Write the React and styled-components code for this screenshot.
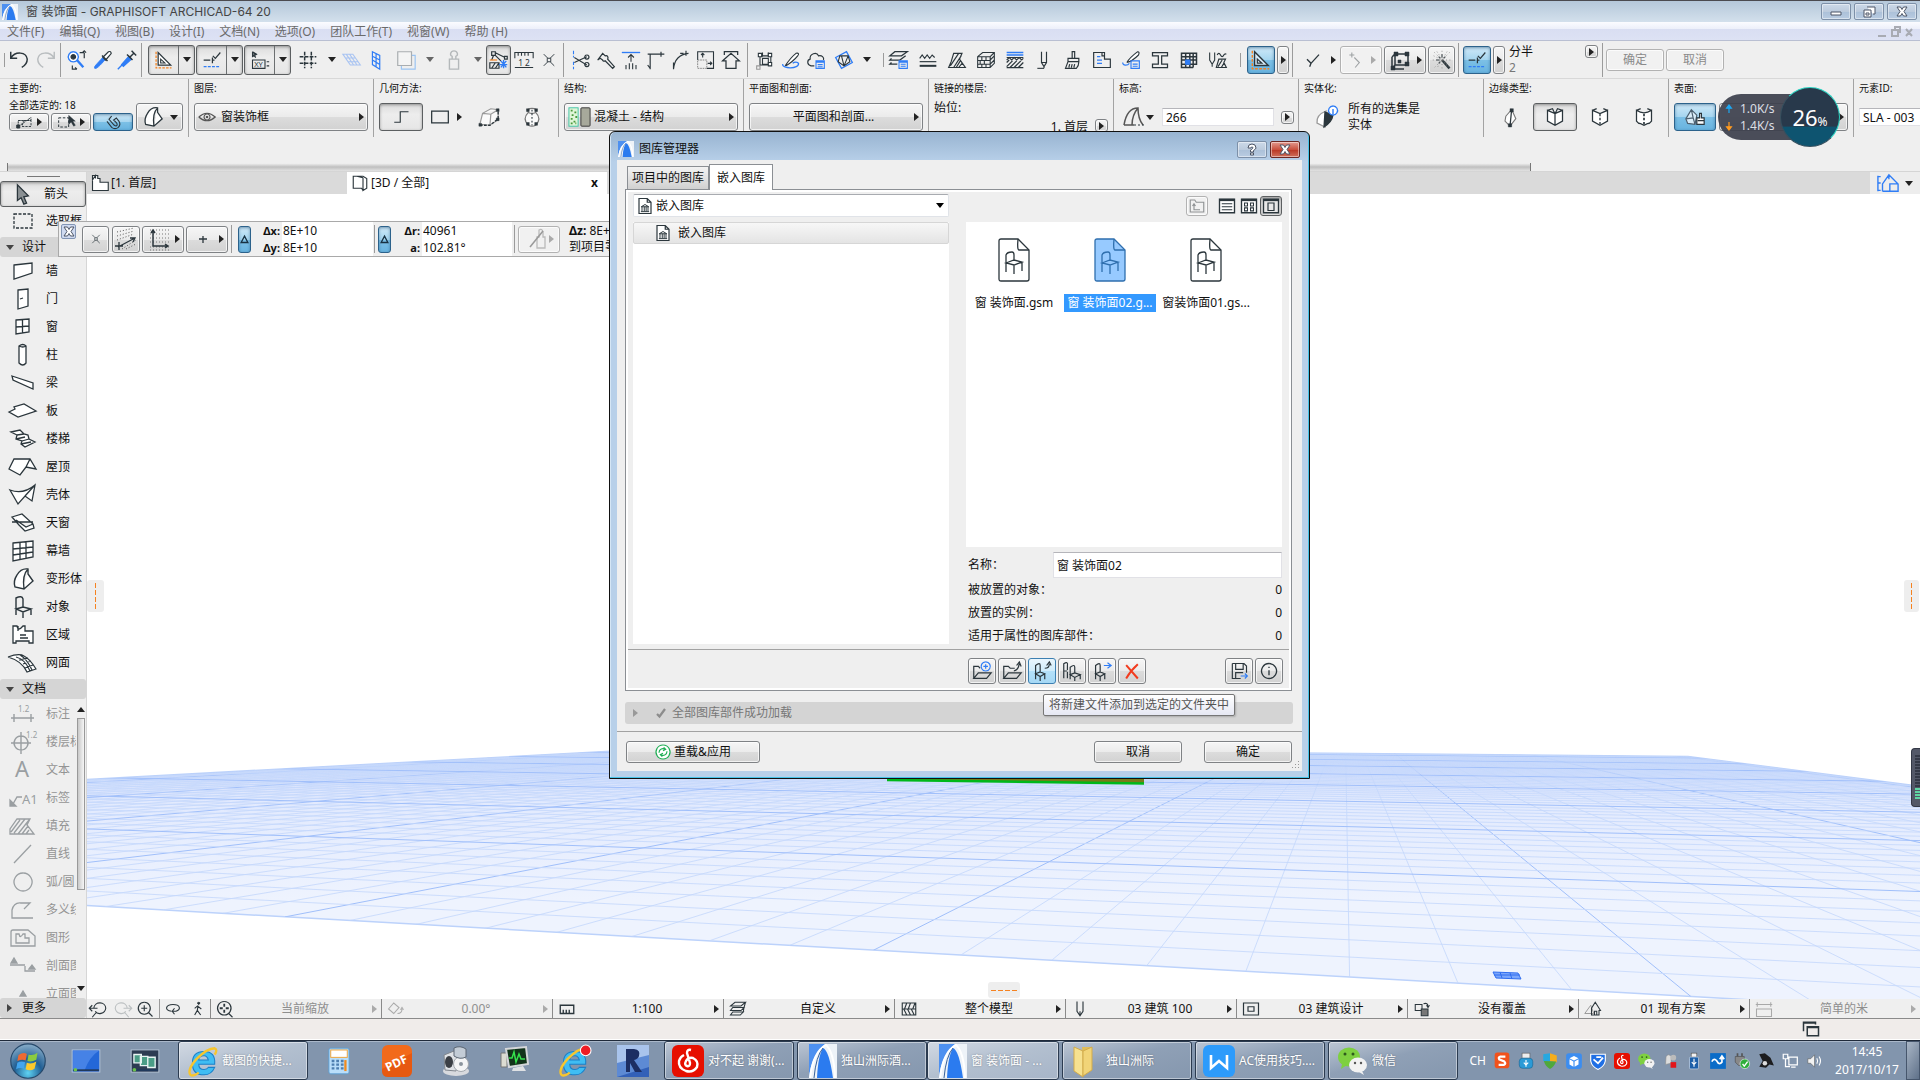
import React from "react";
import styled, { createGlobalStyle, css } from "styled-components";

const Global = createGlobalStyle`
  * { box-sizing: border-box; }
  html, body, #root { height: 100%; }
  body { margin: 0; overflow: hidden; background: #fff; }
  body, button, input, select {
    font-family: "Noto Sans", "Noto Sans CJK SC", sans-serif;
    font-size: 12px; line-height: 16px; color: #111;
  }
  button { margin: 0; padding: 0; border: 0; background: none; white-space: nowrap; cursor: default; }
  svg { display: block; flex: none; overflow: visible; }
`;

/* ---------- icons ---------- */
const K = "#2b363c";
const B = "#2f7df6";
const O = "#f58220";
const G = "#9a9fa2";

/* Each entry is a list of strokes: [path, stroke, fill, width, dash] or { t, x, y, s } for lettering. */
const ICONS = {
  undo: [["M3 3 V10 H10 M3 10 C8 2 20 3 21 11 C21 15 19 18 15 20", K, "none", 1.6]],
  redo: [["M21 3 V10 H14 M21 10 C16 2 4 3 3 11 C3 15 5 18 9 20", "#b9bdbf", "none", 1.6]],
  pick: [["M9 3 a5.500 5.500 0 1 0 .1 0", B, "#fff", 1.5], ["M9 6 a2.500 2.500 0 1 0 .1 0", K, K], ["M13 12 L20 20", B, "none", 2.600], ["M16 4 h5 M21 4 v6 M19 4 L21 2 L23 4 M8 18 v4 h5 M11 20 l2 2", K]],
  dropper: [["M4 21 C3 19 6 17 13 9 L16 11 C9 19 6 22 4 21", B, B, 1], ["M13 9 L19 3 Q22 2 22 5 L16 12 Z", K, "#fff"], ["M12 7 l6 6", K, "none", 1.6]],
  syringe: [["M2 22 L7 17", B, "none", 1.5], ["M6 17 L14 8 L17 11 L8 19 Z", B, B], ["M12 6 l6 6 M15 9 L20 4 M17 2 l5 5 M14 8 l3 3", K, "none", 1.6]],
  triangle: [["M5 3 V18 H20 Z", K, "#fff", 1.5], ["M8 11 V15.500 H13 Z", K], ["M2.500 2 V21.500 H21", O, "none", 1.5, "3 1.500"]],
  triangleB: [["M5 3 V18 H20 Z", K, "#d9eefa", 1.5], ["M8 11 V15.500 H13 Z", K], ["M2.500 2 V21.500 H21", O, "none", 1.5, "3 1.500"]],
  guide: [["M2 12 H10 M12.500 9 V16 M12 12 h3", K, "none", 1.5], ["M13 7 L16 10 L22 3", K, "none", 1.5], ["M2 20 H22", B, "none", 1.5, "3.500 1.500"]],
  xy: [["M3 2 V8 L5 7 L7 9 M3 2 L8 5 L5 7", K, K], ["M3 12 h15 v10 h-15 z", K], { t: "XY", x: 5, y: 20, s: 9 }, ["M20 14 h3 M20 19 h3", K]],
  hash: [["M8 2 V22 M16 2 V22 M2 8 H22 M2 16 H22", K, "none", 1.8, "4.500 1.500"]],
  ghostGrid: [["M1 5 H13 L22 18 H10 Z M5 5 L14 18 M9 5 L18 18 M4 9.500 H16 M7 14 H19", "#a9c4f2"]],
  wallGrid: [["M7 3 L15 7 V22 L7 17 Z M11 5 V20 M7 8 L15 12 M7 12 L15 17", B]],
  layersGhost: [["M7 7 H22 V22 H7 Z", "#9bc4f2"], ["M3 3 H18 V18 H3 Z", "#a9adb0", "#f4f4f4"]],
  weight: [["M7 11 H17 V22 H7 Z M10 11 V8 C7 7 8 2 12 2 C16 2 17 7 14 8 V11", "#b4b8ba", "none", 1.5]],
  trace: [["M4 3 h4 v4 h-4 z M6 7 L4 12 M8 4 L18 9 M8 7 L14 13 M18 8 h3 v3 h-3 z", K], ["M2 15 H12 V21 H2 Z M4 21 L8 15 M8 21 L12 15", K], ["M14 13 l6 7 M20 13 l-6 7 M17 12 v9 M12 17 h9", B, B, 1.5], ["M2 12 h8", O]],
  ruler: [["M1 10 V3 H23 V10 M5 3 v4 M9 3 v4 M13 3 v4 M17 3 v4 M1 21 H23", K], { t: "1 2", x: 5, y: 19, s: 10 }],
  cross: [["M3 2 L10 9 M21 2 L14 9 M3 22 L10 15 M21 22 L14 15 M9 9 h6 v6 h-6 z", K, "none", 1.6]],
  scissors: [["M3 1 V9 M3 14 V23", B, "none", 1.3, "4 2"], ["M4 9 L19 18 M4 15 L19 8", K], ["M19 6 a2.500 2.500 0 1 0 .1 0 M19 15 a2.500 2.500 0 1 0 .1 0", K, "none", 1.5]],
  axe: [["M2 12 L8 4 L11 7 C14 6 15 9 14 11 L22 20 L20 22 L11 13 C9 14 8 13 8 12 L5 10 Z", K, "none", 1.5]],
  extend: [["M1 3 H23", B, "none", 1.6], ["M12 14 V6 M8.500 9 L12 5.500 L15.500 9 M6 18 v5 M10 16 v7 M14 16 v7 M18 18 v5", K]],
  corner: [["M5 23 V5 H22 M2 5 h3 M18 2 v6 M2 18 L5 22", K, "none", 1.4]],
  fillet: [["M3 23 C4 12 10 5 21 4 M18 1 v6 M3 23 V15 M11 4 h4", K, "none", 1.4]],
  resize: [["M2 12 V2 H21 V22 H13", K], ["M2 12 H13 V22 H2 Z", "#888", "none", 1.2, "2 1"], ["M8 9 V4 M6 6 l2-2 l2 2 M14 16 h5 M17 14 l2 2 l-2 2", K]],
  house: [["M2 13 L12 4 L22 13 H18 V22 H6 V13 Z M4 6 V2 H20 V6", K, "none", 1.5]],
  groupBox: [["M5 5 h3 M16 5 h3 M6 5 V19 M19 5 V18 M6 7 H18 M6 18 H18 M9 3 v5 M16 3 v5 M9 10 h7 v7 h-7 z", K], ["M4 4 h4 v4 h-4 z M16 4 h4 v4 h-4 z M16 15 h4 v4 h-4 z", K, "#fff"], ["M2 19 h4 v4 h-4 z", "#999"]],
  penLine: [["M5 19 C7 16 14 7 18 4 C21 3 22 5 20 7 C17 11 9 18 5 19", K, "#fff"], ["M2 17 C1 23 22 23 21 16 C20 14 16 14 14 16", B, "none", 1.6]],
  cloud: [["M10 19 H6 C1 18 1 12 5 11 C4 4 13 2 15 7 C19 6 22 9 21 12", K, "none", 1.4], ["M12 13 H22 V22 H12 Z M12 14.500 H22 M14 17.500 h6 M14 20 h6", B]],
  diamond: [["M2 9 L15 2 L22 15 L9 22 Z", B, "none", 1.6], ["M7 7 L17 7 L19 14 L12 19 L5 14 Z M9 7 L12 19 M17 7 L12 19", K]],
  layerStack: [["M7 2 H22 L15 7 H1 Z M3 10 L1 12 H13 L20 7 M3 15 L1 17 H10", K, "none", 1.5], ["M12 13 H22 V22 H12 Z M14 17 h6 M14 19.500 h6 M12 14.500 H22", B]],
  lineTypes: [["M2 10 L5 6 L8 10 L11 6 L14 10 L17 6 L20 9", K], ["M2 14 H22", K, "none", 1.4], ["M2 19 H22", K, "none", 2.400]],
  fill: [["M8 4 H18 L15 11 L22 21 H2 L5 14 Z M4 19 L14 4 M8 21 L17 7 M11 21 L16 13 M14 21 L18 16", K, "none", 1.4]],
  brick: [["M2 8 L8 3 H22 V16 L17 21 H2 Z M2 8 H17 V21 M17 8 L22 3 M2 12.500 H17 M2 17 H17 M7 8 v4 M12 8 v4 M5 12.500 v4 M10 12.500 v4 M7 17 v4 M12 17 v4 M17 12 L22 7 M17 17 L22 12", K]],
  composite: [["M2 3 H22 M2 6 H22", B, "none", 1.6], ["M2 9 H22 M2 12 L5 9 L8 12 L11 9 L14 12 L17 9 L20 12 L22 10", K], ["M2 15 L5 12 M2 20 L9 13 M6 21 L14 13 M11 21 L19 13 M16 21 L22 15 M2 21 H22", K, "none", 1.5]],
  pen: [["M9 2 V15 L12 20 L15 15 V2 M9 15 h6 M12 20 v2", K, "none", 1.4], ["M4 22 h8", K]],
  brush: [["M11 2 h3 v8 h-3 z M6 10 H19 V14 H6 Z M6 14 L3 22 H16 Q19 19 19 14 M8 17 L7 21 M11 17 L10 21 M14 17 L13 21", K, "none", 1.4]],
  zone: [["M2 3 H12 V7 H15 V11 H22 V21 H2 Z M15 7 V3 H12", K, "none", 1.4], ["M6 8 h4 M6 12 h6 M6 16 h6", B, "none", 1.5]],
  penBox: [["M7 15 C10 10 16 5 20 2 C22 2 22 4 21 6 C17 10 12 14 7 15", K, "#fff"], ["M2 15 C2 19 8 19 10 16 M12 13 H22 V22 H12 Z M14 17 h6 M14 19.500 h6", B, "none", 1.4]],
  ibeam: [["M3 3 H21 V7 H14 V17 H21 V21 H3 V17 H10 V7 H3 Z", K, "none", 1.5]],
  table: [["M3 4 H21 V17 H3 Z M3 8 H21 M3 12 H21 M8 4 V21 M13 4 V21 M17 4 V21 M3 17 V21 H17", K, "none", 1.8], ["M8 12 h5 v5 h-5 z", B, B]],
  penFill: [["M2 3 V12 L5 17 L8 12 V3 M5 17 v3", K], ["M11 6 q2 -4 4 0 q2 4 4 0 q1 -2 3 -1 M13 11 H21 L19 15 L22 21 H10 Z M12 20 L17 12 M16 21 L19 16", K, "none", 1.4]],
  check: [["M3 11 L9 17 L21 4 M9 17 L7 22", K, "none", 2]],
  ghostNode: [["M7 3 v6 M4 6 h6 M10 9 L16 15 L11 21", "#9ea2a4"]],
  editBox: [["M7 6 H20 V17 H7 Z M4 9 V21 H16 M4 21 L7 17 M4 9 L7 6", K, "none", 1.5], ["M6 4 h4 v4 h-4 z M17 4 h4 v4 h-4 z M17 14 h4 v4 h-4 z M3 18 h4 v4 h-4 z M10 12 h3 v3 h-3 z", K, K, 0.5]],
  wand: [["M12 12 L21 22", K, "none", 3], ["M12 5 v4 M5 12 h4 M8 8 l2 2 M16 8 l-2 2 M8 16 l2 -2", K], ["M3 3 l18 18 M12 1 V22 M21 3 L3 21 M1 12 H22 M6 2 L18 20 M2 7 L20 16 M18 2 L7 20", "#777", "none", 1, "1 3"]],
  eye: [["M1 12 Q12 2 23 12 Q12 22 1 12", "#555", "none", 1.5], ["M12 8 a4 4 0 1 0 .1 0", "#555", "none", 1.5], ["M12 11 a1 1 0 1 0 .1 0", "#444", "#444"]],
  polyL: [["M3 19 H11 V5 H22", K, "none", 1.5]],
  rect: [["M2 5 H22 V19 H2 Z", K, "none", 1.5]],
  box3: [["M2 20 L5 8 L14 3 L22 4 V15 L13 21 Z M5 8 L14 9 L22 4 M14 9 L13 21", "#999", "#fafafa"], ["M2 21 L13 21 L22 14 V4", K, "none", 1.4, "3 1.500"], ["M1 19 h3 v3 h-3 z M20 3 h3 v3 h-3 z M20 13 h3 v3 h-3 z", K, K, 0.5]],
  vase: [["M7 4 Q12 1 17 4 L16 7 Q23 14 16 21 Q12 23 8 21 Q1 14 8 7 Z M8 7 Q12 9 16 7", "#777", "#fafafa"], ["M12 4 V21", K, "none", 1.2, "2 2"], ["M6 3 h3 v3 h-3 z M15 3 h3 v3 h-3 z M6 18 h3 v3 h-3 z M15 18 h3 v3 h-3 z", K, K, 0.5]],
  morph: [["M6 8 Q10 1 17 2 L17 7 L22 14 L13 22 L4 20 Q2 14 6 8 M17 2 Q11 8 13 22", K, "#fff", 1.4]],
  magnet: [["M3 8 L7 4 L14 12 Q17 15 15 17 Q13 18 11 16 Z", K, "none", 0.1], ["M10 3 L6 8 L14 17 Q17 19 18 17 Q19 15 17 13 L13 9 L17 6 L21 11 Q24 16 20 20 Q15 24 10 20 L3 11", K, "none", 1.7]],
  selArrow: [["M3 18 V10 H20 V6 M3 18 L20 6 M3 10 h4", K, "none", 1.3, "3 1"], ["M10 10 H20 V18 H8 Z", K, "none", 1.2, "3 1.500"], ["M1 16 h4 v4 h-4 z", K, K]],
  selBox: [["M2 7 H14 V18 H2 Z", K, "none", 1.2, "3 2"], ["M14 4 V15 L17 12 L20 17 L22 16 L19 11 L22 11 Z", K, K, 0.5]],
  slope: [["M3 20 C5 8 10 3 17 3 Q17 14 22 20 M3 20 H13 M17 3 Q11 10 11 20", "#555", "none", 1.5], ["M13 20 H23", K, "none", 1.2, "2 2"]],
  solid: [["M3 18 Q2 10 12 6 L11 22 Z", "#999", "#fff"], ["M11 7 L19 10 Q18 17 10 22 Z", K, K], ["M19 1 a4.500 4.500 0 1 0 .1 0", B, "#fff", 1.3], ["M19 4 v5", B, "none", 1.4]],
  edgeA: [["M14 3 L7 11 L6 17 L12 23 L19 14 Z", "#777", "#fff"], ["M14 3 L12 23", K, "none", 1.5], ["M12 2 h4 v4 h-4 z M10 20 h4 v4 h-4 z", K, K, 0.5]],
  book1: [["M3 4 L12 8 L21 4 V17 L12 22 L3 17 Z M12 8 V22 M3 4 L9 2 L12 8 L15 2 L21 4", K, "#fff", 1.5]],
  book2: [["M3 4 L12 8 L21 4 V17 L12 22 L3 17 Z M3 4 L8 2 M21 4 L16 2", K, "#fff", 1.5], ["M12 8 V22", K, "none", 1.6, "3 2"]],
  book3: [["M3 4 L8 2 M21 4 L16 2 M3 4 Q12 10 21 4 V17 Q19 20 16 20 L12 22 L8 20 Q5 20 3 17 Z", K, "#fff", 1.5], ["M12 8 V22", K, "none", 2, "3 2"]],
  surface: [["M2 14 L8 4 L14 10 L12 20 L4 19 Z M8 4 L10 13 L12 20 M10 13 L2 14", "#4d6070", "#d9ecf7"], ["M17 8 h2 v5 h3 v7 h-8 v-7 h3 z M15 16 h7", K, "#fff"]],
  slab: [["M2 2 H9 V6 H12 V11 H23 V22 H2 Z M2 2 V8 L6 2 V6", K, "#fff", 1.5]],
  door3: [["M8 3 H16 L21 6 V19 L16 22 V5 M16 5 L8 3 H3 V19 H8 M16 22 L14 19 H3", K, "#fff", 1.5]],
  model: [["M6 21 V13 L13 3 L23 13 V21 H14 V13 L23 13 M6 21 H14 M13 3 V8", B, "none", 1.5], ["M1 4 v17 M1 5 h3 M1 12 h3 M1 20 h3", B, "none", 1.5]],
  arrowTool: [["M7 2 V19 L11 16 L14 23 L17 22 L14 15 L19 14 Z", K, "#8a9093", 1.4]],
  marquee: [["M3 5 H21 V19 H3 Z", K, "none", 1.3, "3 1.500"]],
  wall: [["M3 6 L21 4 V14 L3 20 Z", K, "#fff", 1.3]],
  door: [["M7 3 L17 2 V19 L7 22 Z M9 12 l3 -1", K, "#fff", 1.3]],
  window: [["M5 5 L18 4 V17 L5 19 Z M11.500 4 V18 M5 12 L18 11", K, "#fff", 1.3]],
  column: [["M8 3 Q12 0 15 3 V20 Q12 24 8 20 Z M8 3 Q12 5 15 3", K, "#fff", 1.3]],
  beam: [["M1 5 L22 12 V18 L2 9 Z", K, "#fff", 1.3]],
  slabT: [["M-2 13 L4 10 L3 8 L13 5 L25 12 L7 18 Z", K, "#fff", 1.3]],
  stair: [["M0 5 L9 3 L13 7 L17 8 L18 12 L24 15 L14 20 L10 17 L11 14 L5 12 L6 8 Z M6 8 L13 7 M11 14 L18 12 M5 12 L14 10 M10 17 L20 15", K, "#fff", 1.3]],
  roof: [["M-2 14 L3 4 H19 L25 14 L15 12 L9 20 Z M15 12 L19 4", K, "#fff", 1.3]],
  shell: [["M-1 7 Q12 12 24 2 L21 18 L14 13 L7 21 Z M14 13 L24 2", K, "#fff", 1.3]],
  skylight: [["M1 6 L11 3 L22 13 L23 17 L14 20 L8 14 Z M1 11 L22 11 M5 9 L15 16 L22 13", K, "#fff", 1.3]],
  curtain: [["M2 4 L22 2 V18 L2 22 Z M9 3 V20 M15 3 V19 M2 10 L22 8 M2 16 L22 13", K, "#fff", 1.3]],
  chair: [["M5 20 V3 Q11 0 12 4 V12 M5 14 L12 12 L20 14 L12 17 Z M12 17 V23 M20 14 V20", K, "none", 1.4]],
  zoneT: [["M2 3 H6 Q7 9 12 3 H14 V8 H22 V20 H18 V18 H5 V20 H2 Z M7 3 V8 M9 12 h6 M9 15 h8", K, "#fff", 1.3]],
  mesh: [["M-3 6 Q8 2 13 5 Q19 8 25 18 L16 21 Q11 10 -3 6 M5 6 Q14 8 19 20 M9 4 Q16 8 21 19 M8 9 L17 7 M12 13 L20 10 M14 17 L22 14", K, "#fff", 1.2]],
  dim: [["M0 16 H23 M3 12 v8 M20 12 v8", G, "none", 1.4], { t: "1.2", x: 7, y: 10, s: 8, c: G }],
  level: [["M10 6 a7 7 0 1 0 .1 0 M10 2 V24 M0 13 H20", G, "none", 1.4], { t: "1.2", x: 15, y: 8, s: 8, c: G }],
  textA: [{ t: "A", x: 4, y: 19, s: 22, c: G }],
  labelA: [["M2 18 L6 11 H11", G, "none", 1.4], ["M-1 14 V20 H5 Z", G, G], { t: "A1", x: 11, y: 18, s: 13, c: G }],
  fillG: [["M6 5 H19 L16 11 L23 20 H-1 V15 Z M3 19 L14 5 M7 20 L18 6 M11 20 L17 12 M15 20 L18 16 M0 18 L9 6", G, "none", 1.3]],
  line: [["M3 21 L20 3", G, "none", 1.3]],
  circle: [["M12 3 a9 9 0 1 0 .1 0", G, "none", 1.3]],
  poly: [["M22 20 H1 V12 Q3 4 10 5 H19 L13 11", G, "none", 1.3]],
  drawing: [["M2 4 H17 L24 10 V20 H0 V6 Q0 4 2 4 M5 8 H8 Q9 13 12 8 H14 V12 H18 V17 H5 Z", G, "none", 1.3]],
  section: [["M-1 11 H14 V17 H24", G, "none", 1.3, "15 1"], ["M0 9 L3 4 L6 9 Z M18 15 L21 11 L24 15 Z", G, G]],
  elev: [["M-1 18 H24", G, "none", 1.4], ["M9 14 L12 9 L15 14 Z", G, G]],
  ghostPen: [["M14 3 q3 -2 4 2 v5 h2 v11 h-8 v-11 h2 z", "#bbb"], ["M5 20 L18 4", "#999", "none", 1.6]],
  dotsArrow: [["M3 5 L20 1 M3 9 L20 4 M3 13 L20 7 M8 22 L22 13 M12 22 L22 17", "#555", "none", 1, "1 2"], ["M4 20 L21 11 M16 11 h5 l-2 4 M5 15 v8 M1 19 h8", K, "none", 1.3]],
  dotsXY: [["M3 3 H22 M3 7 H22 M3 11 H22 M3 15 H22 M3 20 H22 M3 23 H22", "#777", "none", 1, "1 2"], ["M6 4 V19 H20 M4 6 L6 3 L8 6 M18 17 l3 2 l-3 2", K, "none", 1.5]],
  plus: [["M12 9 V16 M8 12 H16", K, "none", 1.3]],
  delta: [["M12 3 L21 20 H3 Z", "#183142", "none", 3.500]],
  libFile: [["M4 2 H15 L20 7 V22 H4 Z M15 2 V7 H20", K, "#fff", 1.6], ["M7 13 L12 10 L17 13 Z M8 13 v6 M11 13 v6 M13.500 13 v6 M16 13 v6 M6.500 19.500 h11", K, "none", 1.3]],
  upFolder: [["M3 7 V4 H9 L11 7 H21 V20 H3 Z M16 17 H8 V10 M6 12 l2 -3 l2 3", "#8f9294", "none", 1.5]],
  list: [["M2 3 H22 V21 H2 Z", K, "#fff", 1.8], ["M2 4 H22", K, "none", 3], ["M5 9 H19 M5 13 H19 M5 17 H19", K, "none", 1.4]],
  tiles: [["M2 3 H22 V21 H2 Z", K, "#fff", 1.8], ["M2 4 H22", K, "none", 3], ["M6 8 h4 v4 h-4 z M14 8 h4 v4 h-4 z M6 14.500 h4 v4 h-4 z M14 14.500 h4 v4 h-4 z", K, "none", 1.4]],
  large: [["M2 3 H22 V21 H2 Z", K, "#e8e8e8", 1.8], ["M2 4 H22", K, "none", 3], ["M8 8 h8 v10 h-8 z", K, "none", 1.6]],
  folderNew: [["M3 20 V7 H8 L10 9 M3 20 L8 14 H22 L17 20 Z", K, "none", 1.3], ["M16 2 a5 5 0 1 0 .1 0 M16 4.500 v5 M13.500 7 h5", B, "none", 1.3]],
  folderUp: [["M3 20 V7 H8 L10 9 H15 M3 20 L8 14 H22 L17 20 Z M14 12 Q19 11 20 4 M17 6 L20 2 L22 7", K, "none", 1.3]],
  chairUp: [["M5 21 V6 Q10 2 10 6 V14 M5 15 L10 13 L15 15 L10 18 Z M10 18 V23 M15 15 V21", K, "none", 1.3], ["M15 9 Q20 9 20 4 M17 6 L20 2 L22 6", K]],
  chairs: [["M3 20 V4 Q8 1 7 6 V11 M3 12 h4 M7 20 V13", K, "none", 1.3], ["M10 21 V8 Q15 4 15 8 V15 M10 16 L15 14 L21 16 L15 19 Z M15 19 V23 M21 16 V21", K, "none", 1.3]],
  chairOut: [["M5 21 V6 Q10 2 10 6 V14 M5 15 L10 13 L15 15 L10 18 Z M10 18 V23 M15 15 V21", K, "none", 1.3], ["M14 6 H21 M18 3 L22 6 L18 9", B]],
  redX: [["M5 5 L19 21 M19 4 Q10 12 5 21", "#f23b1e", "none", 2.400]],
  save: [["M4 3 H18 L21 6 V14 M14 21 H4 V3 M8 3 V10 H17 V3 M8 21 V14 H17", K, "none", 1.4], ["M14 18 H22 M19 15 L22 18 L19 21", B, "none", 1.4]],
  info: [["M12 3 a9 9 0 1 0 .1 0 M12 11 V17 M12 7 v1.500", K, "none", 1.6]],
  reload: [["M12 1.500 a10.500 10.500 0 1 0 .1 0", "#1fae54", "#fff", 1.8], ["M6 13 C6 7 12 6 15 8 M13 5 L16 8 L12 10 M18 11 C18 17 12 18 9 16 M11 19 L8 16 L12 14", "#1fae54", "none", 1.8]],
  tick: [["M4 14 L9 19 L20 4", "#8c8c8c", "none", 4.500]],
  zPrev: [["M5 11 C6 1 21 2 21 11 C20 19 10 20 7 15 M-1 11 H10 M3 7 L-1 11 L3 15 M8 17 L3 23", K, "none", 1.5]],
  zNext: [["M19 11 C18 1 3 2 3 11 C4 19 14 20 17 15 M25 11 H14 M21 7 L25 11 L21 15 M16 17 L21 23", "#bcc0c2", "none", 1.5]],
  zIn: [["M11 3 a8 8 0 1 0 .1 0 M11 7 V15 M7 11 H15 M17 17 L22 22", K, "none", 1.5]],
  orbit: [["M10 15 C0 14 2 6 12 6 C22 6 23 13 16 15 H11 M14 11 L11 15 L14 19", K, "none", 1.5]],
  walk: [["M13 2 a1.500 1.500 0 1 0 .1 0", K, K, 1.5], ["M12 7 L11 14 L7 21 M11 14 L16 21 M12 7 L7 11 M12 8 L17 12", K, "none", 1.7]],
  zFit: [["M11 2 a9 9 0 1 0 .1 0 M17 18 L22 23", K, "none", 1.5], ["M11 5 v4 M11 13 v4 M5 11 h4 M13 11 h4", K, "none", 2.400]],
  tilt: [["M2 12 L9 4 L16 10 L9 18 Z M14 18 Q20 18 20 12 M18 13 L20 10 L22 13", "#aaa", "none", 1.4]],
  scale: [["M3 7 H21 V18 H3 Z M7 18 v-5 M11 18 v-5 M15 18 v-5", K, "none", 1.8]],
  stack: [["M8 3 H22 L16 8 H2 Z M5 10 H20 L16 14 H2 Z M22 3 L20 10 M5 16 H19 L15 20 H2 Z M20 10 L19 16", K, "none", 1.4]],
  hatch: [["M3 4 H21 V20 H3 Z M3 12 H21 M6 12 L9 4 M11 12 L14 4 M17 12 L20 4 M9 20 L5 12 M14 20 L10 12 M19 20 L15 12", K, "none", 1.5]],
  penV: [["M8 2 V15 L12 21 L16 15 V2 M12 15 V21", K, "none", 1.5]],
  frame: [["M2 4 H22 V20 H2 Z M8 9 H16 V15 H8 Z", K, "none", 1.6]],
  override: [["M3 6 H12 V14 H3 Z M14 5 Q20 3 20 9 M18 7 L20 10 L22 7", K, "none", 1.4], ["M11 12 h9 v9 h-9 z", K, "#777", 1.4]],
  reno: [["M1 18 L9 7 L13 18 Z", "#999"], ["M10 20 V11 L15 3 L22 14 H20 V20 Z M14 20 v-5 h3 v5", K, "none", 1.4]],
  dimG: [["M1 6 H23 M3 3 v6 M21 3 v6 M2 12 H22 V22 H2 Z", "#a9a9a9", "none", 1.4]],
  windows: [["M2 15 V3 H18 V6 M2 4 H18 M7 9 H22 V21 H7 Z M7 10 H22", K, "none", 2]],
};

function Icon({ n, s = 24, o }) {
  return (
    <svg width={s} height={s} viewBox="0 0 24 24" opacity={o} aria-hidden="true">
      {ICONS[n].map((p, i) =>
        Array.isArray(p) ? (
          <path key={i} d={p[0]} stroke={p[1] || K} fill={p[2] || "none"} strokeWidth={p[3] || 1.3} strokeDasharray={p[4]} />
        ) : (
          <text key={i} x={p.x} y={p.y} fontSize={p.s} fill={p.c || K}>{p.t}</text>
        )
      )}
    </svg>
  );
}

function Logo({ w = 16, h = 18 }) {
  return (
    <svg width={w} height={h} viewBox="0 0 28 34" preserveAspectRatio="none" aria-hidden="true">
      <path d="M0 0 H28 V34 H0 Z" fill="#eef3f8" />
      <path d="M0 0 H16 Q2 12 0 34 Z" fill="#4d90f0" />
      <path d="M8 34 Q9 12 14 4 Q20 6 24 34 Z" fill="#2b7bef" />
      <path d="M1 34 Q4 8 17 1 Q25 8 26 34" fill="none" stroke="#fff" strokeWidth="2" />
      <path d="M5 34 Q7 12 14 4" fill="none" stroke="#355f9a" />
    </svg>
  );
}

/* ---------- shared controls ---------- */
const Tri = styled.i`
  flex: none; width: 0; height: 0;
  ${(p) => p.$down
    ? css`border: 4px solid transparent; border-top: 5px solid ${p.$c || "#222"}; border-bottom: 0;`
    : css`border: 4px solid transparent; border-left: 5px solid ${p.$c || "#222"}; border-right: 0;`}
`;

const raised = css`
  border: 1px solid #7f8285;
  border-radius: 3px;
  background: linear-gradient(#f6f6f6, #ebebeb 50%, #dcdcdc 51%, #d2d2d2);
  box-shadow: inset 0 0 0 1px rgba(255, 255, 255, 0.7);
`;
const blueFace = css`
  border: 1px solid #2c628b;
  border-radius: 3px;
  background: linear-gradient(#cfe9f8, #a5d5ef 50%, #7cc0e6 51%, #68b3df);
  box-shadow: inset 0 1px 3px rgba(20, 70, 110, 0.5);
`;
const pressedFace = css`
  border: 1px solid #5c5f61;
  border-radius: 3px;
  background: linear-gradient(#dcdcdc, #ededed 40%, #e6e6e6);
  box-shadow: inset 0 1px 3px rgba(0, 0, 0, 0.35);
`;

const Btn = styled.button`
  display: flex; align-items: center; justify-content: ${(p) => p.$j || "center"};
  flex: none; gap: ${(p) => p.$gap || 0}px;
  width: ${(p) => p.$w}px; height: ${(p) => p.$h || 28}px;
  padding: 0 ${(p) => p.$p || 0}px;
  ${(p) => (p.$k === "flat" ? "" : p.$k === "blue" ? blueFace : p.$k === "pressed" ? pressedFace : raised)}
  ${(p) => p.disabled && css`border-color: #b2b2b2; background: #f1f1f1; color: #8a8a8a;`}
`;
const Sep = styled.span`
  flex: none; width: 1px; height: ${(p) => p.$h || 34}px; background: #9b9b9b;
  margin: 0 ${(p) => p.$r || 0}px 0 ${(p) => p.$l || 0}px;
`;

/* ---------- application frame ---------- */
const Page = styled.div`
  position: relative; display: flex; flex-direction: column; width: 100%; height: 100vh; overflow: hidden; background: #efefef;
`;
const TitleBar = styled.header`
  display: flex; align-items: center; gap: 8px; flex: none; height: 22px; padding: 0 3px 0 2px;
  border-top: 1px solid #4b4b50; background: linear-gradient(#b5c8da, #d3e0ec);
  color: #444; font-family: Inter, "Noto Sans CJK SC", sans-serif;
`;
const WinBtns = styled.div`display: flex; gap: 3px; margin-left: auto;`;
const WinBtn = styled.button`
  display: grid; place-items: center; width: 30px; height: 17px; border: 1px solid ${(p) => (p.$red ? "#6b2723" : "#7d90a8")};
  border-radius: 2px; box-shadow: inset 0 0 0 1px rgba(255, 255, 255, 0.45);
  background: ${(p) => (p.$red ? "linear-gradient(#e39a8f, #c9513f 50%, #b93522 51%, #d0705c)" : "linear-gradient(#ccd9e8, #bccbdd 50%, #abc0d8 51%, #b9cce2)")};
`;
const MenuBar = styled.nav`
  display: flex; align-items: center; gap: 15px; flex: none; height: 19px; padding: 1px 6px 0 7px;
  border-bottom: 1px solid #b9bfd2; background: linear-gradient(#fbfcff, #eceffa 40%, #d9def2 41%, #dde2f4);
  button { color: #6a6a6a; }
`;
const Mdi = styled.span`display: flex; gap: 7px; margin-left: auto;`;
const ToolBar = styled.div`
  display: flex; align-items: center; flex: none; height: 38px; border-bottom: 1px solid #d8d8d8; overflow: hidden;
`;
const Split = styled.span`
  display: flex; flex: none; width: 47px; height: 30px; margin-right: 1px;
  ${pressedFace}
  button { display: grid; place-items: center; flex: 1; }
  button + button { flex: 0 0 16px; border-left: 1px solid #6c6f71; }
`;
const Stack = styled.span`
  display: flex; flex-direction: column; flex: none; width: ${(p) => p.$w}px; padding-left: ${(p) => p.$pl || 0}px;
  line-height: 16px; white-space: nowrap;
  small { font-size: 12px; color: #777; }
`;
const Gap = styled.span`flex: none; width: ${(p) => p.$w}px;`;

function WinGlyph({ t }) {
  const d = {
    min: "M2 7 H12 V10 H2 Z",
    max: "M5 2 H13 V9 H11 M2 5 H9 V12 H2 Z M4 8 h3 v2 h-3 z",
    close: "M2 2 H5.500 L7 4.500 L8.500 2 H12 L9 6.500 L12 11 H8.500 L7 8.500 L5.500 11 H2 L5 6.500 Z",
    help: "M3 5 Q3 1 7 1 Q11 1 11 5 Q11 6 8.500 7.500 V9 H5.500 V7 Q8 5.500 8 5 Q8 4 7 4 Q6 4 6 5 Z M5.500 10 h3 v2 h-3 z",
  }[t];
  return (
    <svg width="14" height="13" viewBox="0 0 14 13" aria-hidden="true">
      <path d={d} fill="#fff" stroke="#4c5566" strokeWidth="1" />
    </svg>
  );
}

const MENUS = ["文件(F)", "编辑(Q)", "视图(B)", "设计(I)", "文档(N)", "选项(O)", "团队工作(T)", "视窗(W)", "帮助 (H)"];

function Tool({ n, w = 25, s = 22, k = "flat", h = 30, o }) {
  return <Btn $w={w} $h={h} $k={k} aria-label={n}><Icon n={n} s={s} o={o} /></Btn>;
}
function Drop({ w = 16, c }) {
  return <Btn $w={w} $k="flat" aria-label="more"><Tri $down $c={c} /></Btn>;
}

function MainTools() {
  return (
    <ToolBar role="toolbar">
      <Sep $h={14} $l={4} />
      <Tool n="undo" w={28} /><Tool n="redo" />
      <Sep $l={2} $r={2} />
      <Tool n="pick" w={26} /><Tool n="dropper" /><Tool n="syringe" />
      <Sep $l={2} $r={6} />
      {["triangle", "guide", "xy"].map((n) => (
        <Split key={n}>
          <button aria-label={n}><Icon n={n} s={20} /></button>
          <button aria-label={n + " options"}><Tri $down /></button>
        </Split>
      ))}
      <Tool n="hash" w={32} s={20} /><Drop />
      <Tool n="ghostGrid" w={24} s={20} /><Tool n="wallGrid" /><Tool n="layersGhost" w={33} /><Drop c="#666" />
      <Tool n="weight" w={32} /><Drop c="#666" />
      <Tool n="trace" k="pressed" /><Tool n="ruler" s={20} /><Tool n="cross" s={14} />
      <Sep $l={2} $r={4} />
      {["scissors", "axe", "extend", "corner", "fillet", "resize", "house"].map((n) => <Tool key={n} n={n} s={20} />)}
      <Sep $l={4} $r={3} />
      <Tool n="groupBox" w={27} s={20} /><Tool n="penLine" s={20} /><Tool n="cloud" s={20} /><Tool n="diamond" w={31} s={20} /><Drop />
      <Sep $h={14} $l={8} />
      {["layerStack", "lineTypes", "fill", "brick", "composite", "pen", "brush", "zone", "penBox", "ibeam", "table", "penFill"].map((n) => (
        <Tool key={n} n={n} w={29} s={20} />
      ))}
      <Sep $h={14} $l={8} $r={6} />
      <Tool n="triangleB" w={28} h={28} k="blue" />
      <Gap $w={2} />
      <Btn $w={12} aria-label="options"><Tri /></Btn>
      <Sep $l={3} $r={4} />
      <Tool n="check" w={32} s={16} />
      <Btn $w={9} $k="flat" aria-label="options"><Tri /></Btn>
      <Gap $w={2} />
      <Btn $w={42} $gap={5} disabled aria-label="node"><Icon n="ghostNode" s={20} /><Tri $c="#aaa" /></Btn>
      <Gap $w={2} />
      <Btn $w={42} $gap={5} aria-label="edit"><Icon n="editBox" /><Tri /></Btn>
      <Gap $w={2} />
      <Btn $w={27} aria-label="wand"><Icon n="wand" s={20} /></Btn>
      <Sep $l={3} $r={4} />
      <Tool n="guide" w={28} h={28} k="blue" s={20} />
      <Gap $w={2} />
      <Btn $w={12} aria-label="options"><Tri /></Btn>
      <Stack $w={80} $pl={4}>分半<small>2</small></Stack>
      <TopBtn $w={13} $h={13} aria-label="options"><Tri /></TopBtn>
      <Sep $l={4} $r={3} />
      <Btn $w={58} $h={22} disabled>确定</Btn>
      <Gap $w={2} />
      <Btn $w={58} $h={22} disabled>取消</Btn>
    </ToolBar>
  );
}
const TopBtn = styled(Btn)`align-self: flex-start; margin-top: 4px;`;

/* ---------- info box ---------- */
const InfoBar = styled.section`display: flex; flex: none; height: 82px; overflow: hidden;`;
const Cell = styled.div`
  position: relative; flex: none; width: 185px; height: 58px; padding: 0 5px; white-space: nowrap;
  border-right: 1px solid #a3a3a3;
  &:first-child { width: 189px; padding-left: 9px; }
  &:last-child { border-right: 0; }
  h2 { margin: 0; height: 16px; font-weight: 400; font-size: 10px; line-height: 18px; }
`;
const Body = styled.div`
  display: flex; align-items: ${(p) => p.$a || "center"}; gap: ${(p) => p.$g || 2}px; height: 28px; margin-top: ${(p) => (p.$t === undefined ? 8 : p.$t)}px;
`;
const Count = styled.p`margin: 2px 0 0; height: 15px; font-size: 10px; line-height: 14px;`;
const FirstCell = styled.div`display: grid; grid-template-columns: auto 47px; column-gap: 2px; align-items: end; margin-top: 1px;`;
const Pair = styled.div`display: flex; gap: 2px;`;
const Field = styled.input`
  width: ${(p) => p.$w}px; height: ${(p) => p.$h || 18}px; padding: 0 3px; border: 1px solid #e1e1e6; border-top-color: #b5b5ba; background: #fff; outline: 0;
`;
const Label = styled.span`flex: 1; text-align: ${(p) => (p.$c ? "center" : "left")};`;
const Story = styled.div`
  display: grid; gap: 3px; padding-top: 5px;
  div { display: flex; justify-content: flex-end; gap: 7px; }
`;
const Swatch = () => (
  <svg width="23" height="22" viewBox="0 0 25 22" aria-hidden="true">
    <rect x="1" y="1" width="10" height="20" fill="#dff5d8" stroke="#3cc3a4" />
    <path d="M3 4 h2 M7 6 h2 M4 9 h2 M8 11 h2 M3 13 h2 M6 16 h2 M3 18 h2 M8 18 h1" stroke="#4a9a3c" strokeWidth="2" />
    <rect x="14" y="1" width="10" height="20" rx="1" fill="#a7a99b" stroke="#333" />
  </svg>
);

function InfoBox() {
  return (
    <InfoBar>
      <Cell>
        <h2>主要的:</h2>
        <FirstCell>
          <div>
            <Count>全部选定的: 18</Count>
            <Pair>
              <Btn $w={40} $h={18} $gap={3} aria-label="all selected"><Icon n="selArrow" s={18} /><Tri /></Btn>
              <Btn $w={40} $h={18} $gap={3} aria-label="marquee"><Icon n="selBox" s={20} /><Tri /></Btn>
              <Btn $w={40} $h={18} $k="blue" aria-label="magnet"><Icon n="magnet" s={16} /></Btn>
            </Pair>
          </div>
          <Btn $w={47} $gap={6} aria-label="morph"><Icon n="morph" s={22} /><Tri $down /></Btn>
        </FirstCell>
      </Cell>
      <Cell>
        <h2>图层:</h2>
        <Body><Btn $w={174} $p={3} $gap={5} $j="flex-start"><Icon n="eye" s={18} /><Label>窗装饰框</Label><Tri /></Btn></Body>
      </Cell>
      <Cell>
        <h2>几何方法:</h2>
        <Body $g={6}>
          <Btn $w={44} $k="pressed" aria-label="polygon"><Icon n="polyL" s={18} /></Btn>
          <Btn $w={34} $k="flat" $gap={7} aria-label="rectangle"><Icon n="rect" s={20} /><Tri /></Btn>
          <Btn $w={40} $k="flat" aria-label="extruded"><Icon n="box3" s={22} /></Btn>
          <Btn $w={34} $k="flat" aria-label="revolved"><Icon n="vase" s={22} /></Btn>
        </Body>
      </Cell>
      <Cell>
        <h2>结构:</h2>
        <Body><Btn $w={174} $p={3} $gap={3}><Swatch /><Label>混凝土 - 结构</Label><Tri /></Btn></Body>
      </Cell>
      <Cell>
        <h2>平面图和剖面:</h2>
        <Body><Btn $w={174} $p={3}><Label $c>平面图和剖面...</Label><Tri /></Btn></Body>
      </Cell>
      <Cell>
        <h2>链接的楼层:</h2>
        <Story><span>始位:</span><div><span>1. 首层</span><Btn $w={13} $h={13} aria-label="story"><Tri /></Btn></div></Story>
      </Cell>
      <Cell>
        <h2>标高:</h2>
        <Body $g={7}>
          <Btn $w={36} $k="flat" $gap={1} aria-label="elevation from"><Icon n="slope" /><Tri $down /></Btn>
          <Field $w={112} aria-label="标高" defaultValue="266" />
          <Btn $w={13} $h={13} aria-label="options"><Tri /></Btn>
        </Body>
      </Cell>
      <Cell>
        <h2>实体化:</h2>
        <Body $g={10}>
          <Gap $w={0} /><Icon n="solid" />
          <Stack $w={90}><span>所有的选集是</span><span>实体</span></Stack>
        </Body>
      </Cell>
      <Cell>
        <h2>边缘类型:</h2>
        <Body $g={2}>
          <Btn $w={42} $k="flat" aria-label="edge"><Icon n="edgeA" s={20} /></Btn>
          <Btn $w={44} $k="pressed" aria-label="hard edge"><Icon n="book1" s={20} /></Btn>
          <Btn $w={42} $k="flat" aria-label="hidden edge"><Icon n="book2" s={20} /></Btn>
          <Btn $w={42} $k="flat" aria-label="soft edge"><Icon n="book3" s={20} /></Btn>
        </Body>
      </Cell>
      <Cell>
        <h2>表面:</h2>
        <Body $g={3}>
          <Btn $w={42} $k="blue" aria-label="surface"><Icon n="surface" s={22} /></Btn>
          <Btn $w={129} $p={3} $j="flex-end"><Tri /></Btn>
        </Body>
        <Monitor />
      </Cell>
      <Cell>
        <h2>元素ID:</h2>
        <Body><Field $w={80} aria-label="元素ID" defaultValue="SLA - 003" /></Body>
      </Cell>
    </InfoBar>
  );
}

/* Network and memory monitor that floats over the surface cell. */
const Pill = styled.div`
  position: absolute; left: 49px; top: 8px; width: 122px; height: 60px; z-index: 2; display: flex; align-items: center;
  color: #dcdfe4; font-size: 12px;
`;
const PillBody = styled.div`
  display: grid; align-content: center; gap: 1px; width: 78px; height: 46px; padding-left: 7px; border-radius: 23px 0 0 23px;
  background: rgba(61, 65, 78, 0.93); line-height: 16px;
  span { display: flex; align-items: center; gap: 7px; }
`;
const Ball = styled.div`
  display: flex; align-items: baseline; justify-content: center; width: 60px; height: 60px; margin-left: -16px; border-radius: 50%;
  background: linear-gradient(#28394b 66%, #0e5470 67%); color: #fff; font-size: 22px; line-height: 58px;
  border: 1px solid #36505f; border-top-color: #2ad1c0; border-right-color: #2ad1c0;
  small { font-size: 12px; }
`;
function Arrow({ up }) {
  return (
    <svg width="8" height="10" viewBox="0 0 10 12" aria-hidden="true">
      <path d={up ? "M5 1 V11 M2 5 L5 1 L8 5 Z" : "M5 1 V11 M2 7 L5 11 L8 7 Z"} stroke={up ? "#1da7f2" : "#ff9a1f"} fill={up ? "#1da7f2" : "#ff9a1f"} strokeWidth="1.500" />
    </svg>
  );
}
function Monitor() {
  return (
    <Pill>
      <PillBody><span><Arrow up />1.0K/s</span><span><Arrow />1.4K/s</span></PillBody>
      <Ball>26<small>%</small></Ball>
    </Pill>
  );
}

const ScrollStrip = styled.div`
  flex: none; height: 11px; padding: 2px 0 1px 7px; border-bottom: 1px solid #d5d5d5;
  div { width: calc(80% - 6px); height: 8px; border-left: 1px solid #777; border-right: 1px solid #777; background: linear-gradient(#f4f4f4, #bfbfbf 50%, #e2e2e2); }
`;

/* ---------- tool palette ---------- */
const Work = styled.div`display: flex; flex: 1; min-height: 0;`;
const Palette = styled.aside`
  display: flex; flex-direction: column; flex: none; width: 87px; border-right: 1px solid #d6d6d6; background: #efefef;
`;
const Handle = styled.div`
  display: grid; place-items: center; height: 9px;
  i { width: 33px; height: 1px; background: #777; }
`;
const ToolRow = styled.button`
  display: flex; align-items: center; flex: none; gap: 11px; width: 100%; height: ${(p) => (p.$on ? 26 : 28)}px; padding-left: 11px;
  color: ${(p) => (p.$dim ? "#949494" : "#111")};
  ${(p) => p.$on && css`${pressedFace} padding-left: 10px;`}
`;
const Head = styled.button`
  display: flex; align-items: center; gap: ${(p) => (p.$shut ? 10 : 8)}px; flex: none; width: 86px; height: 20px; margin-top: ${(p) => (p.$shut ? 0 : 2)}px; padding-left: ${(p) => (p.$shut ? 7 : 6)}px; border-radius: 3px; background: #d5d5d5;
`;
const Docs = styled.div`
  display: flex; flex: 1; min-height: 0; overflow: hidden; padding-top: 1px;
  > div:first-child { width: 76px; overflow: hidden; }
`;
const Scroller = styled.div`
  display: flex; flex-direction: column; align-items: center; justify-content: space-between; width: 10px; padding: 7px 0 7px;
  i:nth-child(2) { width: 8px; height: 172px; margin-bottom: auto; margin-top: 6px; border: 1px solid #999; background: linear-gradient(90deg, #c8c8c8, #f6f6f6); }
`;
const DESIGN = [["wall", "墙"], ["door", "门"], ["window", "窗"], ["column", "柱"], ["beam", "梁"], ["slabT", "板"], ["stair", "楼梯"], ["roof", "屋顶"], ["shell", "壳体"], ["skylight", "天窗"], ["curtain", "幕墙"], ["morph", "变形体"], ["chair", "对象"], ["zoneT", "区域"], ["mesh", "网面"]];
const DOCS = [["dim", "标注"], ["level", "楼层标"], ["textA", "文本"], ["labelA", "标签"], ["fillG", "填充"], ["line", "直线"], ["circle", "弧/圆"], ["poly", "多义线"], ["drawing", "图形"], ["section", "剖面图"], ["elev", "立面图"]];

const TriUp = styled.i`width: 0; height: 0; border: 4px solid transparent; border-top: 0; border-bottom: 5px solid #222;`;

function ToolPalette() {
  return (
    <Palette>
      <Handle><i /></Handle>
      <ToolRow $on><Icon n="arrowTool" s={22} />箭头</ToolRow>
      <ToolRow><Icon n="marquee" />选取框</ToolRow>
      <Head><Tri $down $c="#444" />设计</Head>
      {DESIGN.map(([n, t]) => <ToolRow key={n}><Icon n={n} />{t}</ToolRow>)}
      <Head><Tri $down $c="#444" />文档</Head>
      <Docs>
        <div>{DOCS.map(([n, t]) => <ToolRow key={n} $dim><Icon n={n} />{t}</ToolRow>)}</div>
        <Scroller><TriUp /><i /><Tri $down /></Scroller>
      </Docs>
      <Head $shut><Tri $c="#444" />更多</Head>
    </Palette>
  );
}

/* ---------- viewport ---------- */
const Main = styled.main`display: flex; flex-direction: column; flex: 1; min-width: 0;`;
const ViewTabs = styled.div`display: flex; flex: none; height: 22px; background: #dadada;`;
const ViewTab = styled.button`
  display: flex; align-items: center; gap: 2px; width: 260px; padding: 0 9px 0 4px; background: ${(p) => (p.$on ? "#fff" : "#dadada")};
  b { margin-left: auto; font-weight: 700; }
`;
const TabEnd = styled.button`display: flex; align-items: center; justify-content: center; gap: 6px; width: 50px; margin-left: auto; background: #ededed;`;
const Canvas = styled.div`
  position: relative; flex: 1; min-height: 0; background: #fff; overflow: hidden;
  > svg { width: 100%; height: 100%; }
`;
const Grip = styled.span`
  position: absolute; border-radius: 3px; background: #eee; display: grid; place-items: center;
  ${(p) => p.$side === "left" && css`left: 0; top: 386px; width: 17px; height: 32px;`}
  ${(p) => p.$side === "right" && css`right: 1px; top: 386px; width: 15px; height: 32px;`}
  ${(p) => p.$side === "bottom" && css`left: 0; right: 0; margin: 0 auto; bottom: 1px; width: 32px; height: 16px;`}
  i { ${(p) => (p.$side === "bottom" ? css`width: 26px; height: 1px; background: repeating-linear-gradient(90deg, #f58220 0 5px, transparent 5px 7px);` : css`width: 1px; height: 27px; background: repeating-linear-gradient(#f58220 0 5px, transparent 5px 7px);`)} }
`;
const SideMeter = styled.span`
  position: absolute; right: 0; top: 554px; width: 9px; height: 59px; border-radius: 4px 0 0 4px; border: 1px solid #333846; border-right: 0; background: #535868; padding: 6px 0 0 3px;
  i { display: block; width: 5px; height: 33px; background: repeating-linear-gradient(#343947 0 2px, transparent 2px 3px); }
  i + i { height: 12px; background: repeating-linear-gradient(#5fd6a4 0 2px, transparent 2px 3px); }
`;

/* Two vanishing points on one horizon define the ground plane. */
const HORIZON = 712.6;
const VX = -3319;
const VC = 1345;
const front = (x) => 905.7 + 0.0567 * (x - 87);
function groundLines() {
  const lines = [];
  for (let k = -33; k <= 32; k++) {
    const x = 1 / (0.00027747 - k * 0.000004867) + VX;
    const y = front(x);
    lines.push({ d: `M${VC} ${HORIZON} L${x.toFixed(1)} ${y.toFixed(1)}`, major: k % 8 === 0 });
  }
  for (let k = 1; k <= 66; k++) {
    const h = 1 / (0.003782 + k * 0.000312);
    const slope = h / (VC - VX);
    lines.push({ d: `M-1100 ${(HORIZON + slope * (-1100 - VX)).toFixed(1)} L3000 ${(HORIZON + slope * (3000 - VX)).toFixed(1)}`, major: k % 8 === 0 });
  }
  return lines;
}
const LINES = groundLines();
const PLANE = "M680 747.500 L1688 756.500 L5054 1187 L-1053 841 Z";

function Scene() {
  return (
    <svg viewBox="87 194 1833 805" preserveAspectRatio="xMidYMax slice" aria-hidden="true">
      <defs>
        <clipPath id="plane"><path d={PLANE} /></clipPath>
        <linearGradient id="fog" gradientUnits="userSpaceOnUse" x1="0" y1="748" x2="0" y2="900">
          <stop offset="0" stopColor="#cbd8fc" /><stop offset="0.350" stopColor="#e2eafe" /><stop offset="1" stopColor="#eef3fe" />
        </linearGradient>
      </defs>
      <path d={PLANE} fill="url(#fog)" stroke="#bcd2fb" strokeWidth="1.500" />
      <g clipPath="url(#plane)">
        {LINES.map((l, i) => <path key={i} d={l.d} stroke={l.major ? "#a0bffa" : "#c6d8fb"} strokeWidth="1" strokeOpacity={l.major ? 1 : 0.85} />)}
      </g>
      <path d="M887 772 H1144 V784 L887 780 Z" fill="#7a7a18" />
      <path d="M887 780 L1144 783.500" stroke="#00b81a" strokeWidth="2.500" />
      <path d="M1493 972 L1518 973 L1521 979 L1496 978 Z" fill="#7aa6fb" stroke="#2f6df0" />
      <path d="M1500 972 l2 6 M1510 973 l2 6 M1494 975 h26" stroke="#2f6df0" />
    </svg>
  );
}

const ViewBar = styled.div`display: flex; align-items: center; flex: none; height: 19px; background: #efefef;`;
const ViewCell = styled.button`
  display: flex; align-items: center; flex: 1; height: 19px; padding: 0 4px 0 5px; border-left: 1px solid #8a8a8a;
  span { flex: 1; padding-left: 4px; text-align: center; color: ${(p) => (p.$dim ? "#8e8e8e" : "#111")}; }
`;
const VIEWS = [["zFit", "当前缩放", 1], ["tilt", "0.00°", 1], ["scale", "1:100"], ["stack", "自定义"], ["hatch", "整个模型"], ["penV", "03 建筑 100"], ["frame", "03 建筑设计"], ["override", "没有覆盖"], ["reno", "01 现有方案"], ["dimG", "简单的米", 1]];

/* ---------- coordinate tracker ---------- */
const Tracker = styled.div`
  position: absolute; left: 58px; top: 221px; z-index: 3; display: flex; align-items: center; width: 560px; height: 36px; padding-left: 2px;
  border: 1px solid #a9a9a9; background: #efefef;
`;
const TinyClose = styled.button`
  align-self: flex-start; display: grid; place-items: center; flex: none; width: 15px; height: 15px; margin: 2px 6px 0 0; border: 1px solid #8295b4; border-radius: 2px; background: #cfdaf0;
`;
const Coord = styled.div`
  display: grid; grid-template-columns: ${(p) => p.$l}px ${(p) => p.$v}px; grid-auto-rows: 17px; flex: none;
  label { text-align: right; padding-right: 2px; font-weight: 700; font-size: 11px; line-height: 17px; }
  input { min-width: 0; width: 100%; border: 0; padding: 0 1px; background: #fff; outline: 0; }
`;
function CoordBox() {
  return (
    <Tracker>
      <TinyClose aria-label="close"><WinGlyph t="close" /></TinyClose>
      <Btn $w={27} $h={27} aria-label="snap"><Icon n="cross" s={10} /></Btn><Gap $w={3} />
      <Btn $w={28} $h={27} aria-label="gravity"><Icon n="dotsArrow" /></Btn><Gap $w={2} />
      <Btn $w={42} $h={27} $gap={4} aria-label="origin"><Icon n="dotsXY" /><Tri /></Btn><Gap $w={2} />
      <Btn $w={42} $h={27} $gap={4} aria-label="point"><Icon n="plus" /><Tri /></Btn>
      <Sep $h={28} $l={3} $r={6} />
      <Btn $w={13} $h={27} $k="blue" aria-label="relative"><Icon n="delta" s={9} /></Btn>
      <Coord $l={31} $v={91}><label htmlFor="cx">Δx:</label><input id="cx" defaultValue="8E+10" /><label htmlFor="cy">Δy:</label><input id="cy" defaultValue="8E+10" /></Coord>
      <Sep $h={28} $l={1} $r={3} />
      <Btn $w={13} $h={27} $k="blue" aria-label="polar"><Icon n="delta" s={9} /></Btn>
      <Coord $l={31} $v={90}><label htmlFor="cr">Δr:</label><input id="cr" defaultValue="40961" /><label htmlFor="ca">a:</label><input id="ca" defaultValue="102.81°" /></Coord>
      <Sep $h={28} $l={2} $r={3} />
      <Btn $w={42} $h={27} disabled aria-label="plane"><Icon n="ghostPen" /><Tri $c="#aaa" /></Btn>
      <Stack $w={60} $pl={9}><span><b>Δz:</b> 8E+10</span><span>到项目零</span></Stack>
    </Tracker>
  );
}

/* ---------- library dialog ---------- */
const Dialog = styled.section`
  position: absolute; left: 609px; top: 131px; z-index: 5; width: 701px; padding: 0 7px 7px; border: 1px solid #111; border-radius: 6px 6px 0 0;
  background: linear-gradient(#98b4d1, #b8d0e9 30px, #b8d0e9); box-shadow: inset -1px -1px 0 #46c3e8, inset 1px 0 0 #d5e6f5;
`;
const DlgTitle = styled.header`
  display: flex; align-items: center; gap: 5px; height: 28px; padding: 6px 2px 0 1px;
  h1 { margin: 0; font-size: 12px; font-weight: 400; }
  div { display: flex; gap: 3px; margin-left: auto; }
`;
const DlgBody = styled.div`position: relative; background: #efefef; padding-top: 4px;`;
const Tabs = styled.div`display: flex; align-items: flex-end; height: 25px; padding-left: 10px; position: relative; z-index: 1;`;
const Tab = styled.button`
  width: ${(p) => (p.$on ? 64 : 82)}px; height: ${(p) => (p.$on ? 26 : 23)}px; margin-bottom: ${(p) => (p.$on ? -1 : 0)}px;
  border: 1px solid #8b8f94; border-bottom: 0; background: ${(p) => (p.$on ? "#fff" : "linear-gradient(#f3f3f3, #d0d0d0)")};
`;
const Pane = styled.div`margin: 0 10px 0 8px; border: 1px solid #8b8f94; box-shadow: inset 0 0 0 2px #fff; padding: 4px 2px 6px;`;
const Columns = styled.div`display: grid; grid-template-columns: 316px 316px; justify-content: space-between; padding: 0 7px 2px 5px;`;
const Col = styled.div`display: flex; flex-direction: column;`;
const Combo = styled.label`
  display: flex; align-items: center; gap: 2px; height: 23px; margin-bottom: 5px; padding: 0 4px 0 2px; border: 1px solid #e0e3e8; border-top-color: #a8abb0; border-radius: 2px; background: #fff;
  select { flex: 1; appearance: none; border: 0; background: transparent; padding: 0; outline: 0; }
`;
const Tree = styled.div`flex: 1; margin-bottom: 3px; background: #fff;`;
const TreeRow = styled.button`
  display: flex; align-items: center; gap: 6px; width: 100%; height: 22px; padding-left: 20px; border: 1px solid #d6d6d6; border-radius: 2px; background: linear-gradient(#f7f7f7, #e4e4e4);
`;
const ViewModes = styled.div`display: flex; justify-content: flex-end; align-items: center; height: 23px; margin-bottom: 5px;`;
const Files = styled.div`display: flex; align-items: flex-start; height: 325px; background: #fff; padding-top: 16px;`;
const FileItem = styled.button`
  display: flex; flex-direction: column; align-items: center; gap: 12px; width: 96px;
  span { padding: 1px 3px; color: ${(p) => (p.$on ? "#fff" : "#111")}; background: ${(p) => (p.$on ? "#3399ff" : "none")}; }
`;
const NameRow = styled.div`display: grid; grid-template-columns: 85px 1fr; align-items: center; height: 26px; margin-top: 5px; padding-left: 2px;`;
const StatRow = styled.div`display: flex; justify-content: space-between; align-items: center; height: 23px; padding-left: 2px;`;
const Rule = styled.hr`margin: 0; border: 0; border-top: 1px solid #a2a2a2;`;
const FileTools = styled.div`display: flex; gap: 2px; padding: 8px 6px 0 340px;`;
const ToolSpot = styled.span`position: relative;`;
const Tip = styled.span`
  position: absolute; left: 15px; top: 36px; z-index: 2; padding: 2px 5px; border: 1px solid #767676; border-radius: 2px; white-space: nowrap; color: #555;
  background: linear-gradient(#fff, #e6e8f3); box-shadow: 1px 1px 2px rgba(0, 0, 0, 0.2);
`;
const LoadBar = styled.div`
  display: flex; align-items: center; gap: 5px; height: 22px; margin: 11px 9px 7px 8px; padding-left: 8px; border-radius: 3px; background: #d4d4d4; color: #777;
  svg { margin-left: 12px; }
`;
const Footer = styled.div`
  display: flex; align-items: center; gap: 22px; padding: 9px 10px 8px 9px;
  button:first-child { margin-right: auto; }
`;
const Corner = styled.i`
  position: absolute; right: 3px; bottom: 3px; width: 8px; height: 8px; clip-path: polygon(100% 0, 100% 100%, 0 100%);
  background: radial-gradient(circle, #999 1px, transparent 1px) 0 0 / 3px 3px;
`;

function FileIcon({ on }) {
  const c = on ? "#2f6fae" : K;
  return (
    <svg width="32" height="44" viewBox="0 0 32 44" aria-hidden="true">
      <path d="M3 1 H20 L31 12 V41 Q31 43 29 43 H3 Q1 43 1 41 V3 Q1 1 3 1 Z" fill={on ? "#97caff" : "#fff"} stroke={c} strokeWidth="1.300" />
      <path d="M20 1 Q19 12 21 12 H31" fill="none" stroke={c} strokeWidth="1.300" />
      <path d="M8 34 V17 Q9 14 14 14 Q16 14 16 17 V23 M8 25 L16 22 L24 24 L16 27 Z M16 27 V36 M24 24 V33" fill="none" stroke={c} strokeWidth="1.300" />
    </svg>
  );
}

function LibraryManager() {
  return (
    <Dialog role="dialog" aria-labelledby="dlg">
      <DlgTitle>
        <Logo w={16} h={16} /><h1 id="dlg">图库管理器</h1>
        <div><WinBtn aria-label="help"><WinGlyph t="help" /></WinBtn><WinBtn $red aria-label="close"><WinGlyph t="close" /></WinBtn></div>
      </DlgTitle>
      <DlgBody>
        <Tabs role="tablist"><Tab role="tab">项目中的图库</Tab><Tab role="tab" aria-selected="true" $on>嵌入图库</Tab></Tabs>
        <Pane>
          <Columns>
            <Col>
              <Combo><Icon n="libFile" s={18} /><select aria-label="图库"><option>嵌入图库</option></select><Tri $down $c="#000" /></Combo>
              <Tree><TreeRow><Icon n="libFile" s={18} />嵌入图库</TreeRow></Tree>
            </Col>
            <Col>
              <ViewModes>
                <Btn $w={22} $h={20} disabled aria-label="up"><Icon n="upFolder" s={18} /></Btn><Gap $w={8} />
                <Btn $w={22} $h={20} $k="flat" aria-label="list"><Icon n="list" s={18} /></Btn>
                <Btn $w={22} $h={20} $k="flat" aria-label="small icons"><Icon n="tiles" s={18} /></Btn>
                <Btn $w={22} $h={20} $k="pressed" aria-label="large icons"><Icon n="large" s={18} /></Btn>
              </ViewModes>
              <Files>
                <FileItem><FileIcon /><span>窗 装饰面.gsm</span></FileItem>
                <FileItem $on><FileIcon on /><span>窗 装饰面02.g...</span></FileItem>
                <FileItem><FileIcon /><span>窗装饰面01.gs...</span></FileItem>
              </Files>
              <NameRow><label htmlFor="nm">名称：</label><Field id="nm" $w={229} $h={26} defaultValue="窗 装饰面02" /></NameRow>
              <StatRow><span>被放置的对象：</span><span>0</span></StatRow>
              <StatRow><span>放置的实例：</span><span>0</span></StatRow>
              <StatRow><span>适用于属性的图库部件：</span><span>0</span></StatRow>
            </Col>
          </Columns>
          <Rule />
          <FileTools>
            <Btn $w={28} $h={26} aria-label="new folder"><Icon n="folderNew" s={22} /></Btn>
            <Btn $w={28} $h={26} aria-label="add folder"><Icon n="folderUp" s={22} /></Btn>
            <ToolSpot>
              <HotBtn aria-label="add file"><Icon n="chairUp" s={22} /></HotBtn>
              <Tip role="tooltip">将新建文件添加到选定的文件夹中</Tip>
            </ToolSpot>
            <Btn $w={28} $h={26} aria-label="duplicate"><Icon n="chairs" s={22} /></Btn>
            <Btn $w={28} $h={26} aria-label="export"><Icon n="chairOut" s={22} /></Btn>
            <Btn $w={28} $h={26} aria-label="delete"><Icon n="redX" s={20} /></Btn>
            <Right>
              <Btn $w={28} $h={26} aria-label="save"><Icon n="save" s={20} /></Btn>
              <Btn $w={28} $h={26} aria-label="info"><Icon n="info" s={20} /></Btn>
            </Right>
          </FileTools>
        </Pane>
        <LoadBar><Tri $c="#999" /><Icon n="tick" s={12} />全部图库部件成功加载</LoadBar>
        <Rule />
        <Footer>
          <Btn $w={134} $h={22} $gap={3}><Icon n="reload" s={16} />重载&amp;应用</Btn>
          <Btn $w={88} $h={22}>取消</Btn>
          <Btn $w={88} $h={22}>确定</Btn>
        </Footer>
        <Corner />
      </DlgBody>
    </Dialog>
  );
}
const HotBtn = styled.button`
  display: grid; place-items: center; width: 28px; height: 26px; border: 1px solid #3c7fb1; border-radius: 3px; background: linear-gradient(#eaf6fd, #d0ecfb 50%, #b4e0f9 51%, #a5d8f5);
`;
const Right = styled.span`display: flex; gap: 2px; margin-left: auto;`;

/* ---------- status and taskbar ---------- */
const Status = styled.div`
  display: flex; align-items: center; justify-content: flex-end; flex: none; height: 22px; padding-right: 100px; border-top: 1px solid #8a8a8a; border-bottom: 1px solid #fff; background: #f0ecea;
`;
const Task = styled.footer`
  display: flex; align-items: center; flex: none; height: 40px; border-top: 1px solid #1f2a3a; background: #8295ad; box-shadow: inset 0 1px 0 #a9b7c9;
`;
const Launch = styled.button`display: grid; place-items: center; flex: none; width: ${(p) => p.$w || 59}px; height: 39px;`;
const Window = styled.button`
  display: flex; align-items: center; gap: ${(p) => p.$g || 4}px; flex: none; width: ${(p) => p.$w || 130}px; height: 39px; margin-right: ${(p) => (p.$join ? 0 : 3)}px; padding-left: 7px; color: #fff;
  border: 1px solid #2b3b50; border-radius: 3px; text-shadow: 0 0 2px rgba(0, 0, 0, 0.35);
  background: ${(p) => (p.$on ? "linear-gradient(165deg, #d2d9e3, #b2bfcf 50%, #a7b5c8)" : "linear-gradient(165deg, #bcc6d4, #8fa0b6 45%, #8597ae)")};
  box-shadow: inset 0 0 0 1px rgba(255, 255, 255, 0.45);
`;
const Tray = styled.div`display: flex; align-items: center; margin-left: auto; color: #fff;`;
const TrayIcon = styled.span`display: grid; place-items: center; width: 24px; height: 24px;`;
const Clock = styled.time`display: grid; width: 76px; text-align: center; line-height: 18px;`;
const Peek = styled.button`width: 14px; height: 39px; margin-left: 1px; border: 1px solid #46566c; background: linear-gradient(120deg, #a9b6c6, #5f7189);`;

const Art = ({ w, h, vb, children }) => <svg width={w} height={h || w} viewBox={vb || "0 0 32 32"} aria-hidden="true">{children}</svg>;
const IE = ({ s = 34, dot }) => (
  <Art w={s}>
    <path d="M27 19 H12 Q12 24 17 24 Q20 24 21 22 H27 Q24 29 17 29 Q6 29 6 18 Q6 7 17 7 Q28 7 27 19 Z M12 15 H21 Q20 11 17 11 Q12 11 12 15 Z" fill="#3fbdf3" stroke="#1c80c8" fillRule="evenodd" />
    <path d="M4 29 Q1 24 10 14 Q20 4 27 4 Q30 5 27 10 M4 29 Q7 31 12 27" fill="none" stroke="#f7c62f" strokeWidth="2.200" />
    {dot && <circle cx="27" cy="6" r="5" fill="#ee1c25" stroke="#fff" />}
  </Art>
);
const Orb = () => (
  <Art w={38}>
    <defs><radialGradient id="orb" cx=".5" cy=".85" r=".8"><stop offset="0" stopColor="#5fd3f3" /><stop offset=".5" stopColor="#215f94" /><stop offset="1" stopColor="#7fa6c4" /></radialGradient></defs>
    <circle cx="16" cy="16" r="14.500" fill="url(#orb)" stroke="#27496b" />
    <path d="M8 11 Q12 8 15 10 L14 15.500 Q11 14 7 16 Z" fill="#ef6a32" /><path d="M16.500 10.500 Q20 12 24 9 L23 15 Q19 17 15.500 16 Z" fill="#8ccb3f" />
    <path d="M7 17.500 Q10 15.500 13.500 17 L12.500 22.500 Q9 21 6 23 Z" fill="#42a5ee" /><path d="M15 17.500 Q19 19 23 16.500 L21.500 22.500 Q18 25 14 23 Z" fill="#fbc92c" />
  </Art>
);
const Desk = ({ multi }) => (
  <Art w={30} h={24} vb="0 0 32 26">
    <rect x="1" y="1" width="30" height="24" fill={multi ? "#2d3c52" : "#2467d8"} stroke="#b8c7d8" />
    {multi ? <path d="M4 6 h8 v9 h-8 z M11 8 h8 v10 h-8 z M19 9 h8 v11 h-8 z" fill="#4b9d86" stroke="#e8f4f2" strokeWidth="1.500" /> : <path d="M2 2 H30 Q20 8 14 24 H2 Z" fill="#5d95f0" opacity=".6" />}
    <rect x="2" y="22" width="28" height="2" fill="#20395c" /><circle cx="4.500" cy="22.500" r="2" fill="#6bc24a" />
  </Art>
);
const Calc = () => (
  <Art w={22} h={30} vb="0 0 24 30">
    <rect x="1" y="1" width="22" height="28" rx="2" fill="#b9defa" stroke="#5c9fd4" /><rect x="3" y="3" width="18" height="8" fill="#fff" stroke="#f0a030" />
    <path d="M4 15 h3 M9 15 h3 M14 15 h3 M4 19 h3 M9 19 h3 M14 19 h3 M4 23 h3 M9 23 h3 M14 23 h3" stroke="#4e7fb0" strokeWidth="2.500" /><path d="M19 14 v12" stroke="#f08c1e" strokeWidth="2.500" />
  </Art>
);
const Pdf = () => (
  <Art w={32}><rect x="1" y="0" width="30" height="32" rx="6" fill="#f26a1b" /><path d="M1 24 L31 8 V26 Q31 32 25 32 H7 Q1 32 1 26 Z" fill="#df4f0c" opacity=".6" />
    <text x="4" y="22" fontSize="12" fontWeight="700" fill="#fff" transform="rotate(-25 16 18)">PDF</text></Art>
);
const Cam = () => (
  <Art w={32}><ellipse cx="16" cy="26" rx="13" ry="5" fill="#d8dade" /><path d="M4 10 L14 6 L18 12 L16 26 L5 25 Z" fill="#dfe2e6" stroke="#80868d" /><ellipse cx="9" cy="17" rx="4" ry="6" fill="#3b3f45" /><circle cx="21" cy="19" r="7.500" fill="#f4f5f6" stroke="#a3a8ae" /><circle cx="21" cy="19" r="2" fill="#8b949d" /><path d="M14 3 Q20 0 26 4 V12 Q20 15 14 11 Z" fill="#c3ccd6" stroke="#5c6774" /></Art>
);
const Pc = () => (
  <Art w={32}><path d="M2 8 h6 v14 h-6 z" fill="#dcdcd2" stroke="#777" /><path d="M7 4 L27 2 L29 19 L10 22 Z" fill="#12331a" stroke="#d5d7da" strokeWidth="2" /><path d="M10 13 h3 l2 -6 l2 10 l3 -8 l2 5 h4" fill="none" stroke="#35e04c" strokeWidth="1.500" /><path d="M14 23 l10 -2 l3 5 h-14 z" fill="#dfe1e4" /></Art>
);
const Revit = () => (
  <Art w={32}><rect width="32" height="32" fill="#a9c4ec" /><path d="M0 32 V18 L32 10 V32 Z" fill="#5d8ad4" /><path d="M0 32 L32 22 V32 Z" fill="#3260b8" /><path d="M9 27 V4 H17 Q24 5 22 11 Q21 14 17 15 L25 27 H18 L13 18 V27 Z" fill="#1c2e63" /></Art>
);
const Netease = ({ s = 32 }) => (
  <Art w={s}><rect width="32" height="32" rx="6" fill="#e60f00" /><path d="M19 5 Q15 4 15 8 L18 18 Q18 22 15 21 Q12 20 14 16 Q16 12 21 13 Q27 16 25 22 Q21 28 14 26 Q6 23 7 16 Q8 12 12 10" fill="none" stroke="#fff" strokeWidth="2.400" /></Art>
);
const Folder = () => (
  <Art w={28} h={34} vb="0 0 28 34"><path d="M12 3 h9 v22 l-8 6 z" fill="#e0bd5a" /><path d="M4 3 L13 7 V33 L4 27 Z" fill="#f6e190" stroke="#d2ab4b" /><path d="M13 7 L22 3 V26 L13 32 Z" fill="#f1d478" stroke="#d2ab4b" /></Art>
);
const Wps = () => (
  <Art w={32}><rect width="32" height="32" rx="6" fill="#2d9bfb" /><path d="M8 10 V23 L16 16 L24 23 V10" fill="none" stroke="#fff" strokeWidth="2.600" /></Art>
);
const WeChat = ({ s = 32 }) => (
  <Art w={s}><ellipse cx="13" cy="12" rx="11" ry="9.500" fill="#7ed040" /><path d="M6 19 L5 24 L11 20 Z" fill="#7ed040" /><ellipse cx="22" cy="20" rx="9" ry="7.500" fill="#f2f2f2" /><path d="M26 26 l2 4 l-5 -3 z" fill="#f2f2f2" /><circle cx="9" cy="9" r="1.500" fill="#2f5a1c" /><circle cx="17" cy="9" r="1.500" fill="#2f5a1c" /><circle cx="19" cy="18" r="1.200" fill="#555" /><circle cx="25" cy="18" r="1.200" fill="#555" /></Art>
);
const TRAY = [
  <><rect x="3" y="1" width="26" height="28" rx="5" fill="#f2521c" /><path d="M22 8 H13 Q9 9 11 13 L20 17 Q24 21 19 23 H10" fill="none" stroke="#fff" strokeWidth="4" /></>,
  <><rect x="9" y="2" width="14" height="9" fill="#eee" stroke="#555" /><rect x="4" y="11" width="24" height="18" rx="6" fill="#2b9ad6" stroke="#15608f" /><path d="M16 14 v12 M12 19 l4 4 l4 -4" stroke="#fff" strokeWidth="2" fill="none" /></>,
  <><path d="M4 4 L16 2 V16 L4 16 Z" fill="#26a8e0" /><path d="M16 2 L28 6 V18 L16 16 Z" fill="#f7ad1a" /><path d="M5 16 L27 17 Q23 27 16 30 Q8 26 5 16 Z" fill="#4fa83b" /></>,
  <><rect x="2" y="2" width="28" height="28" rx="5" fill="#3c8df0" /><path d="M16 7 L24 11 L16 15 L8 11 Z M8 13 L15 17 V26 L8 22 Z M24 13 L17 17 V26 L24 22 Z" fill="#fff" /></>,
  <><path d="M3 4 H29 V16 Q27 26 16 31 Q5 26 3 16 Z" fill="#1f6fe5" stroke="#fff" strokeWidth="2" /><path d="M8 13 L16 20 L25 10 M13 9 h9" fill="none" stroke="#fff" strokeWidth="3" /></>,
  null, null,
  <><path d="M9 8 Q14 2 18 8 V20 L8 22 Z" fill="#ddd" stroke="#888" /><circle cx="22" cy="10" r="5" fill="#bbb" /><rect x="17" y="18" width="10" height="10" fill="#e3151a" /></>,
  <><rect x="11" y="2" width="10" height="7" fill="#f2f2f2" stroke="#444" /><rect x="8" y="9" width="16" height="21" rx="2" fill="#1d5fa8" stroke="#e6eef7" /><path d="M16 12 v14 M12 18 l4 4 l4 -4" stroke="#fff" strokeWidth="2" fill="none" /></>,
  <><rect x="2" y="2" width="28" height="28" fill="#0a6cc8" /><path d="M5 17 Q9 10 14 16 Q18 24 23 18 V9 M19 13 L23 7 L27 13" fill="none" stroke="#fff" strokeWidth="3" /></>,
  <><path d="M8 2 v6 M16 2 v6" stroke="#555" strokeWidth="3" /><path d="M4 8 H20 V18 L14 24 H10 L4 18 Z" fill="#888" stroke="#444" /><circle cx="21" cy="21" r="8.500" fill="#2fae3a" stroke="#fff" /><path d="M17 21 l3 4 l6 -8" fill="none" stroke="#fff" strokeWidth="2.500" /></>,
  <><path d="M4 4 L14 2 L24 10 L30 24 L22 22 L16 28 L4 26 L10 16 Z" fill="#1d1d1f" /><circle cx="14" cy="20" r="4" fill="#ddd" /></>,
  <><path d="M4 4 h8 v8 h-8 z M8 12 V26 H16 M14 9 H29 V23 H14 Z M18 27 h8" fill="none" stroke="#fff" strokeWidth="2.200" /></>,
  <><path d="M5 12 H10 L17 5 V27 L10 20 H5 Z" fill="#f2f2f2" stroke="#555" /><path d="M21 11 Q24 16 21 21 M25 8 Q30 16 25 24" fill="none" stroke="#fff" strokeWidth="2" /></>,
];

function Taskbar() {
  return (
    <Task>
      <Launch $w={56} aria-label="start"><Orb /></Launch>
      <Launch aria-label="desktop"><Desk /></Launch>
      <Launch aria-label="switch windows"><Desk multi /></Launch>
      <Gap $w={4} />
      <Window $on $g={2}><IE />截图的快捷...</Window>
      <Launch $w={56} aria-label="calculator"><Calc /></Launch>
      <Launch aria-label="pdf"><Pdf /></Launch>
      <Launch aria-label="camera"><Cam /></Launch>
      <Launch aria-label="monitor"><Pc /></Launch>
      <Launch aria-label="browser"><IE dot /></Launch>
      <Launch aria-label="revit"><Revit /></Launch>
      <Gap $w={2} />
      <Window $g={4}><Netease />对不起 谢谢(...</Window>
      <Window $join $g={4}><Gap $w={0} /><Logo w={28} h={34} />独山洲际酒...</Window>
      <Window $on $w={132} $g={4}><Gap $w={0} /><Logo w={28} h={34} />窗 装饰面 - ...</Window>
      <Window $g={8}><Folder />独山洲际</Window>
      <Window $g={4}><Wps />AC使用技巧....</Window>
      <Window $g={4}><WeChat />微信</Window>
      <Tray>
        <span>CH</span><Gap $w={4} />
        {TRAY.map((a, i) => (
          <TrayIcon key={i}>{i === 5 ? <Netease s={16} /> : i === 6 ? <WeChat s={18} /> : <Art w={18}>{a}</Art>}</TrayIcon>
        ))}
        <Gap $w={3} />
        <Clock><span>14:45</span><span>2017/10/17</span></Clock>
        <Peek aria-label="show desktop" />
      </Tray>
    </Task>
  );
}

export default function App() {
  return (
    <Page>
      <Global />
      <TitleBar>
        <Logo w={16} h={16} /><span>窗 装饰面 - GRAPHISOFT ARCHICAD-64 20</span>
        <WinBtns>{["min", "max", "close"].map((t) => <WinBtn key={t} aria-label={t}><WinGlyph t={t} /></WinBtn>)}</WinBtns>
      </TitleBar>
      <MenuBar>
        {MENUS.map((m) => <button key={m}>{m}</button>)}
        <Mdi>
          <svg width="36" height="12" viewBox="0 0 36 12" aria-hidden="true"><path d="M0 10 H8 M14 4 h6 v6 h-6 z M17 4 v-3 h5 v6 M28 3 L34 10 M34 3 L28 10" fill="none" stroke="#a8abb3" strokeWidth="2" /></svg>
        </Mdi>
      </MenuBar>
      <MainTools />
      <InfoBox />
      <ScrollStrip><div /></ScrollStrip>
      <Work>
        <ToolPalette />
        <Main>
          <ViewTabs>
            <ViewTab><Icon n="slab" s={18} />[1. 首层]</ViewTab>
            <ViewTab $on><Icon n="door3" s={18} />[3D / 全部]<b>x</b></ViewTab>
            <TabEnd aria-label="navigator"><Icon n="model" s={22} /><Tri $down /></TabEnd>
          </ViewTabs>
          <Canvas>
            <Scene />
            <Grip $side="left"><i /></Grip><Grip $side="right"><i /></Grip><Grip $side="bottom"><i /></Grip>
            <SideMeter><i /><i /></SideMeter>
          </Canvas>
          <ViewBar>
            <Tool n="zPrev" w={23} h={19} s={18} /><Tool n="zNext" w={23} h={19} s={18} /><Tool n="zIn" w={23} h={19} s={18} />
            <Sep $h={19} $l={3} />
            <Tool n="orbit" w={26} h={19} s={18} /><Tool n="walk" w={24} h={19} s={16} />
            {VIEWS.map(([n, t, dim]) => (
              <ViewCell key={n} $dim={dim}><Icon n={n} s={18} /><span>{t}</span><Tri $c={dim ? "#aaa" : "#222"} /></ViewCell>
            ))}
          </ViewBar>
        </Main>
      </Work>
      <Status><Icon n="windows" s={18} /></Status>
      <Taskbar />
      <CoordBox />
      <LibraryManager />
    </Page>
  );
}
